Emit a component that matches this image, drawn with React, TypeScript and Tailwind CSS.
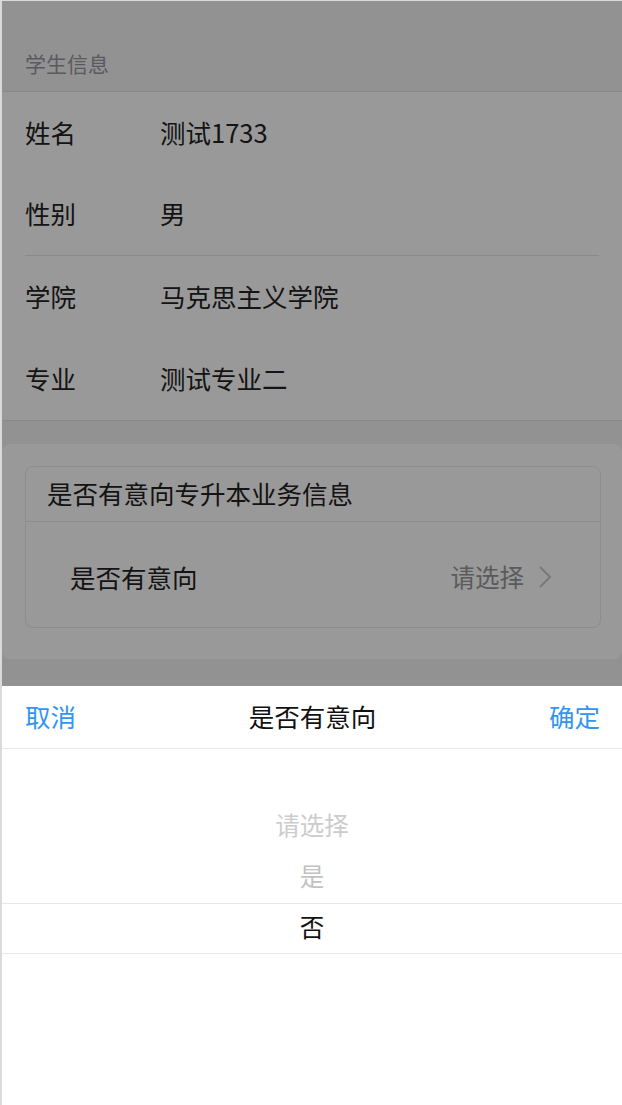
import React from 'react';

const font = { fontFamily: '"Noto Sans CJK SC", "Noto Sans", sans-serif' };

interface InfoRowProps {
    label: string;
    value: string;
    divider?: boolean;
}

const InfoRow: React.FC<InfoRowProps> = ({ label, value, divider }) => {
    return (
        <div className="px-[23px]">
            <div className={`flex items-center h-[82px] pb-[3px] ${divider ? 'border-b border-[#e6e6e6]' : ''}`}>
                <span className="w-[135px] text-[25.5px] leading-[30px] text-[#222]">{label}</span>
                <span className="text-[25.5px] leading-[30px] text-[#222]">{value}</span>
            </div>
        </div>
    );
};

const App: React.FC = () => {
    return (
        <div style={font} className="w-[622px] h-[1105px] border-t border-l-2 border-[#dadada] bg-white overflow-hidden">
            <div className="relative h-[1104px] bg-[#f4f4f6]">
                {/* page */}
                <div className="pt-[47px] pb-[13px] pl-[23px]">
                    <span className="text-[21px] leading-[30px] text-[#969799]">学生信息</span>
                </div>
                <div className="bg-white border-y border-[#e4e4e4]">
                    <InfoRow label="姓名" value="测试1733" />
                    <InfoRow label="性别" value="男" divider />
                    <InfoRow label="学院" value="马克思主义学院" />
                    <InfoRow label="专业" value="测试专业二" />
                </div>

                <div className="mt-[23px] bg-white rounded-lg pt-[22px] pb-[31px] pl-[23px] pr-[21px]">
                    <div className="border border-[#ebebeb] rounded-lg">
                        <div className="h-[55px] flex items-center pl-[21px] pb-[2px] border-b border-[#ebebeb]">
                            <span className="text-[25.5px] leading-[30px] text-[#222]">是否有意向专升本业务信息</span>
                        </div>
                        <div className="h-[105px] flex items-center justify-between pl-[44px] pr-[48px] pt-[5px]">
                            <span className="text-[25.5px] leading-[30px] text-[#222]">是否有意向</span>
                            <div className="flex items-center gap-[14px]">
                                <span className="text-[24.5px] leading-[30px] text-[#969799]">请选择</span>
                                <svg width="14" height="24" viewBox="0 0 14 24" fill="none">
                                    <polyline points="2,2 12,12 2,22" stroke="#c8c9cc" strokeWidth="2" />
                                </svg>
                            </div>
                        </div>
                    </div>
                </div>

                {/* mask */}
                <div className="absolute inset-0 bg-black/40" />

                {/* picker popup */}
                <div className="absolute left-0 right-0 bottom-0 h-[419px] bg-white">
                    <div className="h-[63px] flex items-center justify-between pl-[23px] pr-[22px] pb-[2px] border-b border-[#e8e8e8]">
                        <span className="text-[25.5px] leading-[30px] text-[#3196f3]">取消</span>
                        <span className="text-[25.5px] leading-[30px] text-[#111]">是否有意向</span>
                        <span className="text-[25.5px] leading-[30px] text-[#3196f3]">确定</span>
                    </div>
                    <div className="pt-[52px] flex flex-col">
                        <div className="h-[51px] flex items-center justify-center pb-[2px] text-[24.5px] text-[#cccccc]">请选择</div>
                        <div className="h-[51px] flex items-center justify-center pb-[2px] text-[24.5px] text-[#c2c2c2]">是</div>
                        <div className="h-[51px] flex items-center justify-center pb-[2px] text-[24.5px] text-[#111] border-y border-[#e6e6e6]">否</div>
                    </div>
                </div>
            </div>
        </div>
    );
};

export default App;
